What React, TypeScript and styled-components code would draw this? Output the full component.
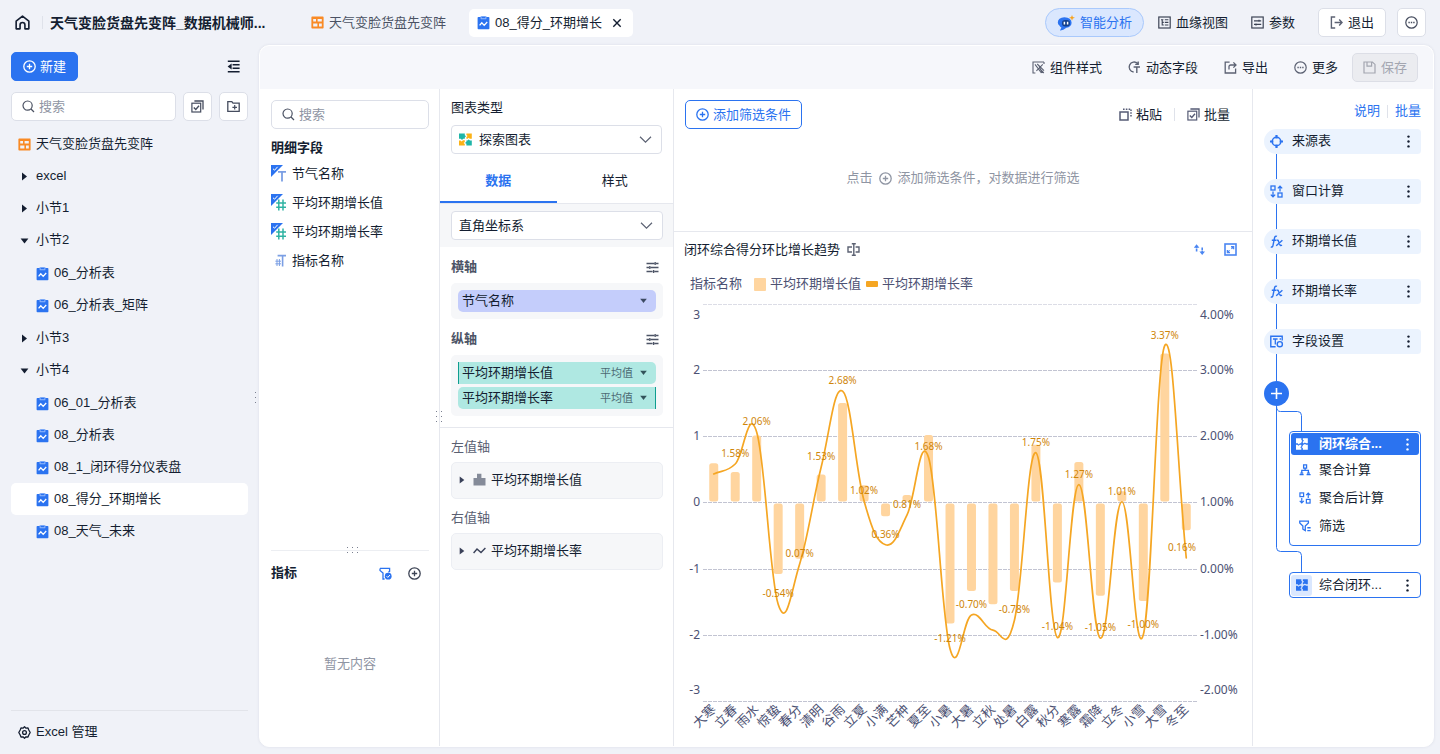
import React from "react";
import styled, { createGlobalStyle, css } from "styled-components";

const ink = "#141e31";
const blue = "#2b73f0";
const muted = "#8f95a3";
const line = "#e6e8ee";

const GlobalStyle = createGlobalStyle`
  *, *::before, *::after { box-sizing: border-box; }
  body {
    margin: 0;
    background: #f0f2f8;
    color: ${ink};
    font: 13px/20px "Liberation Sans", "Noto Sans CJK SC", sans-serif;
  }
  button, input, select { font: inherit; color: inherit; }
  button { cursor: pointer; }
  ul { list-style: none; margin: 0; padding: 0; }
  h1, h2, h3, p { margin: 0; font: inherit; }
`;

/* ---------- icons ---------- */

const Svg = styled.svg`
  display: block;
  flex: none;
  overflow: visible;
`;

type IconProps = { name: IconName; size?: number; color?: string };

const glyphs = {
  home: <path d="M1 5.4 6.5 1 12 5.4V12H8.6V8.6a2.1 2.1 0 0 0-4.2 0V12H1Z" strokeWidth="1.4" strokeLinejoin="round" />,
  board: (
    <path
      d="M1.2 .4H11.8A.8.8 0 0 1 12.6 1.2V11.8A.8.8 0 0 1 11.8 12.6H1.2A.8.8 0 0 1 .4 11.8V1.2A.8.8 0 0 1 1.2.4ZM2.2 3V5.6H5V3ZM6.6 3V5.6H10.8V3ZM2.2 7.4V10.6H6.4V7.4ZM8 7.4V10.6H10.8V7.4Z"
      fill="currentColor"
      fillRule="evenodd"
      stroke="none"
    />
  ),
  sheet: (
    <>
      <rect x="0.6" y="1" width="11.8" height="12.2" rx="0.8" fill="currentColor" stroke="none" />
      <rect x="3.6" y="0" width="5.8" height="3.2" rx="0.4" fill="#8fb6fb" stroke="none" />
      <rect x="4.6" y="0.8" width="3.8" height="1.4" fill="currentColor" stroke="none" />
      <path d="M2.6 9.4 4.8 6.8 7.2 9.4 10.2 6" stroke="#fff" strokeWidth="1.3" />
    </>
  ),
  close: <path d="M2.5 2.5 10.5 10.5M10.5 2.5 2.5 10.5" strokeWidth="1.5" />,
  lineage: (
    <>
      <rect x="0.8" y="1" width="11.4" height="11" strokeWidth="1.2" />
      <path d="M3 3.8H5.4M6.8 3.8H10.4M4.2 3.8V9H5.8M4.2 6.4H5.8M6.8 6.4H10.4M6.8 9H10.4" strokeWidth="1.1" />
    </>
  ),
  params: (
    <>
      <rect x="0.8" y="1" width="11.4" height="11" strokeWidth="1.2" />
      <path d="M3 4.8H10.2M3 8.4H10.2M8 3.8V5.8M5 7.4V9.4" strokeWidth="1.2" />
    </>
  ),
  exit: <path d="M5.2 1H1.4V12H5.2M4.6 6.5H11.8M9.2 3.6 12 6.5 9.2 9.4" strokeWidth="1.4" />,
  more: (
    <>
      <circle cx="6.5" cy="6.5" r="5.7" strokeWidth="1.2" />
      <path d="M3.4 6.5H4.8M5.8 6.5H7.2M8.2 6.5H9.6" strokeWidth="1.5" />
    </>
  ),
  plus: (
    <>
      <circle cx="6.5" cy="6.5" r="5.7" strokeWidth="1.3" />
      <path d="M3.8 6.5H9.2M6.5 3.8V9.2" strokeWidth="1.3" />
    </>
  ),
  collapse: (
    <>
      <path d="M.8 1.2H12.6M5.6 4.8H12.6M5.6 8.2H12.6M.8 11.8H12.6" strokeWidth="1.4" />
      <path d="M4.6 3.6V9.4L.6 6.5Z" fill="currentColor" stroke="none" />
    </>
  ),
  search: (
    <>
      <circle cx="5.6" cy="5.6" r="4.6" strokeWidth="1.2" />
      <path d="M9 9 12 12" strokeWidth="1.2" />
    </>
  ),
  multi: (
    <>
      <rect x="0.9" y="3.2" width="8.8" height="8.8" strokeWidth="1.2" />
      <path d="M3.4 1H12V9.4" strokeWidth="1.3" />
      <path d="M2.8 7.4 4.8 9.4 8 5.8" strokeWidth="1.4" />
    </>
  ),
  folder: (
    <>
      <path d="M0.8 11.4V1.6H4.8L6 3.2H12.2V11.4Z" strokeWidth="1.3" />
      <path d="M5.4 7.3H10M7.7 5V9.6" strokeWidth="1.2" />
    </>
  ),
  gear: (
    <>
      <path d="M6.5.8 8 2.2 10 2 10.8 4 12.2 6.5 10.8 9 10 11 8 10.8 6.5 12.2 5 10.8 3 11 2.2 9 .8 6.5 2.2 4 3 2 5 2.2Z" strokeWidth="1.3" strokeLinejoin="round" />
      <circle cx="6.5" cy="6.5" r="1.9" strokeWidth="1.3" />
    </>
  ),
  widgetStyle: <path d="M12 1H1V12H3.4M12 1V3M3 3.4 9.4 12M5.2 3 12 9.6M10.8 3.4 4.4 9.8M7 5.6 10.4 12M11.8 12 8 8" strokeWidth="1.1" />,
  dynamic: <path d="M9.6 2.4A5 5 0 1 0 5.6 11M10.2.6V3.4H7.2M5.6 6H12M8.8 6V12" strokeWidth="1.4" />,
  export: <path d="M5.6 1.2H1.2V12H11.6V7.6M5 8.4V5.6Q5 4 6.8 4H11.6M9.4 1.4 12 4 9.4 6.6" strokeWidth="1.3" />,
  save: <path d="M1 1H9.4L12 3.4V12H1ZM4 1V5.2H8.6V1" strokeWidth="1.2" />,
  paste: (
    <>
      <rect x="1" y="4" width="8" height="8" strokeWidth="1.5" />
      <path d="M4 1.2H12M12 1.4V9.4" strokeWidth="1.5" strokeDasharray="1.6 1.2" />
    </>
  ),
  rename: <path d="M5 4H1V9H5M8.6 4H12V9H8.6M4.8.8H8.8M4.8 12.2H8.8M6.8.8V12.2" strokeWidth="1.4" />,
  sort: (
    <>
      <path d="M3.6 8.6V3.6M9.2 4.6V9.6" strokeWidth="1.6" strokeDasharray="2.8 .6" />
      <path d="M.8 4.8 3.6 1.2 6.4 4.8ZM6.4 8.4 9.2 12 12 8.4Z" fill="currentColor" stroke="none" />
    </>
  ),
  expand: (
    <>
      <rect x="1" y="1" width="11" height="11" strokeWidth="1.6" />
      <path d="M7 3.6H9.6V6.2M6 9.6H3.4V7M9.4 3.8 7.4 5.8M3.6 9.4 5.6 7.4" strokeWidth="1.3" />
    </>
  ),
  sliders: <path d="M0.5 2.5H8.4M10 2.5H12.5M9.2 1V4M0.5 6.5H3M4.6 6.5H12.5M3.8 5V8M0.5 10.5H6.6M8.4 10.5H12.5M7.6 9V12" strokeWidth="1.3" />,
  chevron: <path d="M1 3.8 6.5 9.2 12 3.8" strokeWidth="1.2" />,
  right: <path d="M4 2.6 9 6.5 4 10.4Z" fill="currentColor" stroke="none" />,
  down: <path d="M2.6 4.4H10.4L6.5 9.4Z" fill="currentColor" stroke="none" />,
  filterCheck: (
    <>
      <path d="M1 1.4H10.6V4.4L9.4 5.2M1 1.4V3.4L4 6V12H5.6" strokeWidth="1.3" />
      <circle cx="9.2" cy="9.2" r="3.4" fill="currentColor" stroke="none" />
      <path d="M7.6 9.2 8.8 10.4 11 8" stroke="#fff" strokeWidth="1" />
    </>
  ),
  bars: <path d="M.5 12.5V5H4V.8H8.4V5H12.5V12.5Z" fill="currentColor" stroke="none" />,
  trend: <path d="M.6 9 4 5 8 8.6 12.4 4" strokeWidth="1.4" />,
  source: (
    <>
      <circle cx="6.5" cy="6.5" r="4.3" strokeWidth="1.5" />
      <path d="M6.5 0V3.4M6.5 9.6V13M0 6.5H3.4M9.6 6.5H13" strokeWidth="2.2" />
    </>
  ),
  windowCalc: (
    <>
      <rect x="1" y="1" width="4" height="4" strokeWidth="1.3" />
      <rect x="8" y="8" width="4" height="4" strokeWidth="1.3" />
      <path d="M3 6.4V11.8M.8 9.6 3 11.8 5.2 9.6M10 6.4V1.2M7.8 3.4 10 1.2 12.2 3.4" strokeWidth="1.3" />
    </>
  ),
  fx: <path d="M7 1.4Q5 .4 4.5 3L3 10.4Q2.6 12.6.8 11.8M1.8 5.2H6.2M6.6 5.4Q8 4.6 8.6 6.4L9.8 9.6Q10.4 11.2 12 10.2M12.4 5.2 6.2 10.8" strokeWidth="1.4" />,
  fieldSet: (
    <>
      <path d="M5.6 11.8H.8V1.2H12.2V5.6" strokeWidth="1.4" />
      <path d="M3 4H7.6M5.3 4V9.4M9.6 4H11" strokeWidth="1.3" />
      <circle cx="9.8" cy="9.2" r="2.6" strokeWidth="1.4" />
    </>
  ),
  aggregate: <path d="M5 1H8.2V4.4H5ZM6.6 4.4V6.6M3 9.4V6.8H10.2V9.4M.6 11.4H5M8.2 11.4H12.6M1.4 9.8H4.6M8.6 9.8H11.8" strokeWidth="1.4" />,
  filterList: <path d="M.8 1.2H10.2V3.2L6.8 6.6V11.6L4.2 10V6.6L.8 3.2ZM9 8.4H12.6M9 11.4H12.6" strokeWidth="1.4" />,
  explore: (
    <g stroke="none" fill="currentColor">
      <path d="M0 .4H5.8V2.2L7 3.2 5.8 4.4V5.8H4.2L3 7 1.8 5.8H0Z" />
      <path d="M7.4.4H12.8V5.8H10.8L9.6 4.8 8.6 5.8H7.4V4L8.6 3 7.4 2Z" />
      <path d="M0 7.4H1.4L2.6 8.4 4 7.2H5.8V9L4.6 10 5.8 11V12.6H0Z" />
      <path d="M8.4 7.4 9.6 6.4 11 7.4H12.8V12.6H7.4V10.8L6 10 7.4 8.8V7.4Z" />
    </g>
  ),
  kebab: (
    <g fill="currentColor" stroke="none">
      <circle cx="6.5" cy="1.6" r="1.2" />
      <circle cx="6.5" cy="6.5" r="1.2" />
      <circle cx="6.5" cy="11.4" r="1.2" />
    </g>
  ),
};
type IconName = keyof typeof glyphs;

const Icon = ({ name, size = 13, color = "currentColor" }: IconProps) => (
  <Svg width={size} height={size} viewBox="0 0 13 13" fill="none" stroke="currentColor" color={color} aria-hidden="true">
    {glyphs[name]}
  </Svg>
);

const Bot = () => (
  <Svg width="18" height="16" viewBox="0 0 18 16" aria-hidden="true">
    <path d="M.8 7.6Q1 2.4 7.4 2.2Q14.4 2.4 14.6 7.8 14.4 12 9.4 12.8Q6 15.6 3 15.4L4.4 12.6Q3 11.8 2.4 10.4 .8 9.6 .8 7.6Z" fill="#2b73f0" />
    <rect x="5" y="5" width="8" height="6.4" rx="3.2" fill="#123f8c" />
    <path d="M7.4 6.8V9.6M10.6 6.8V9.6" stroke="#fff" strokeWidth="1.5" />
    <path d="M15 0 15.8 2 18 2.8 15.8 3.6 15 5.8 14.2 3.6 12 2.8 14.2 2Z" fill="#f7a21b" />
  </Svg>
);

const ExploreLogo = () => (
  <Svg width="13" height="13" viewBox="0 0 13 13" aria-hidden="true">
    <path d="M0 .4H5.8V2.2L7 3.2 5.8 4.4V5.8H4.2L3 7 1.8 5.8H0Z" fill="#1fb5a8" />
    <path d="M7.4.4H12.8V5.8H10.8L9.6 4.8 8.6 5.8H7.4V4L8.6 3 7.4 2Z" fill="#fbb217" />
    <path d="M0 7.4H1.4L2.6 8.4 4 7.2H5.8V9L4.6 10 5.8 11V12.6H0Z" fill="#fbb217" />
    <path d="M8.4 7.4 9.6 6.4 11 7.4H12.8V12.6H7.4V10.8L6 10 7.4 8.8V7.4Z" fill="#1fb5a8" />
  </Svg>
);

type FieldKind = "text" | "number" | "plain";
const FieldIcon = ({ kind }: { kind: FieldKind }) => (
  <Svg width="15" height="17" viewBox="0 0 15 17" fill="none" aria-hidden="true">
    {kind !== "plain" && (
      <>
        <path d="M0 0H12L0 12Z" fill={blue} />
        <path d="M2 3.8 3.6 5.2 6.6 1.8" stroke="#fff" strokeWidth="1" />
      </>
    )}
    {kind === "text" && <path d="M7 6.8H15M11 6.8V16.6" stroke="#7b9fe4" strokeWidth="1.8" />}
    {kind === "number" && <path d="M7.8 5.6V16.4M12 5.6V16.4M5.2 9H15M5.2 13.2H15" stroke="#2fb3a3" strokeWidth="1.5" />}
    {kind === "plain" && (
      <>
        <path d="M6.6 3.6H15M11.6 3.6V14.4" stroke="#7b9fe4" strokeWidth="1.6" />
        <path d="M6 7V14M8.4 7V14M4.4 9.2H10M4.4 11.8H10" stroke="#7b9fe4" strokeWidth="1" />
      </>
    )}
  </Svg>
);

/* ---------- shared controls ---------- */

const PlainButton = styled.button<{ $color?: string; $gap?: number }>`
  display: flex;
  align-items: center;
  gap: ${(p) => p.$gap ?? 5}px;
  padding: 0;
  border: 0;
  background: none;
  white-space: nowrap;
  color: ${(p) => p.$color ?? ink};
`;

const BoxButton = styled(PlainButton)<{ $tone?: "primary" | "outline" | "disabled" }>`
  justify-content: center;
  height: 29px;
  padding: 0 11px;
  border: 1px solid #dcdfe8;
  border-radius: 5px;
  background: #fff;
  ${(p) => p.$tone === "primary" && css`color: #fff; background: ${blue}; border-color: ${blue};`}
  ${(p) => p.$tone === "outline" && css`padding: 0 10px; color: ${blue}; border-color: ${blue};`}
  ${(p) => p.$tone === "disabled" && css`padding: 0 10px; color: #a3a6b0; background: #ebecf0; border-color: #dcdee6;`}
`;

const SquareButton = styled(BoxButton)`
  width: 29px;
  padding: 0;
  color: #454c5e;
`;

const Divider = styled.span`
  width: 1px;
  height: 13px;
  background: #dfe2ea;
`;

const SearchBox = styled.label`
  display: flex;
  flex: 1;
  align-items: center;
  gap: 4px;
  min-width: 0;
  height: 29px;
  padding: 0 10px;
  color: #4a5162;
  background: #fff;
  border: 1px solid #dcdfe8;
  border-radius: 5px;
  input {
    width: 100%;
    min-width: 0;
    padding: 0;
    border: 0;
    outline: 0;
    background: none;
  }
  input::placeholder { color: ${muted}; opacity: 1; }
`;

const Search = () => (
  <SearchBox>
    <Icon name="search" />
    <input type="text" placeholder="搜索" aria-label="搜索" />
  </SearchBox>
);

const Dots = styled.span<{ $cols: number; $rows: number }>`
  display: grid;
  grid-template-columns: repeat(${(p) => p.$cols}, 1px);
  grid-template-rows: repeat(${(p) => p.$rows}, 1px);
  gap: 4px;
  i { background: #7b8090; }
`;
const Grip = ({ cols, rows }: { cols: number; rows: number }) => (
  <Dots $cols={cols} $rows={rows}>
    {Array.from({ length: cols * rows }, (_, i) => <i key={i} />)}
  </Dots>
);

/* ---------- page frame ---------- */

const Page = styled.div`
  display: flex;
  flex-direction: column;
  min-height: 100vh;
`;

const Header = styled.header`
  display: flex;
  align-items: center;
  height: 45px;
  padding: 0 14px 0 15px;
`;

const Title = styled.h1`
  width: 229px;
  margin: 0 24px 0 7px;
  font-size: 14px;
  font-weight: 700;
  white-space: nowrap;
`;

const HomeLink = styled.a`
  display: flex;
  margin-right: 12px;
  color: ${ink};
`;

const Tab = styled.div<{ $active?: boolean }>`
  display: flex;
  align-items: center;
  height: 28px;
  margin-right: 4px;
  padding: 0 10px 0 8px;
  border-radius: 5px;
  background: ${(p) => (p.$active ? "#fff" : "transparent")};
  color: ${(p) => (p.$active ? ink : "#4b5264")};
`;

const TabLabel = styled.span`
  margin: 0 9px 0 5px;
  white-space: nowrap;
`;

const HeaderActions = styled.div`
  display: flex;
  align-items: center;
  margin-left: auto;
`;

const AiButton = styled(PlainButton)`
  height: 29px;
  padding: 0 11px;
  margin-right: 14px;
  border: 1px solid #a9c9fc;
  border-radius: 15px;
  background: #dae7fe;
  color: ${blue};
`;

const HeaderItem = styled(PlainButton)`
  margin-right: 23px;
`;

const ExitButton = styled(BoxButton)`
  margin-right: 11px;
`;

const Body = styled.div`
  display: flex;
  flex: 1;
  padding: 0 6px 7px 11px;
`;

/* ---------- sidebar ---------- */

const Sidebar = styled.aside`
  display: flex;
  flex-direction: column;
  flex: none;
  width: 237px;
  padding-top: 7px;
`;

const SideTop = styled.div`
  display: flex;
  align-items: center;
  justify-content: space-between;
  padding-right: 8px;
`;

const SideSearch = styled.div`
  display: flex;
  gap: 7px;
  margin: 11px 0 7px;
`;

const TreeRow = styled(PlainButton)<{ $depth?: number; $active?: boolean }>`
  width: 100%;
  height: 32px;
  padding-left: ${(p) => (p.$depth ? 25 : 7)}px;
  border-radius: 5px;
  background: ${(p) => (p.$active ? "#fff" : "transparent")};
`;

const ChildList = styled.ul`
  margin: 1px 0;
`;

const SideFooter = styled.div`
  margin-top: auto;
  padding: 11px 0 5px 7px;
  border-top: 1px solid #e2e4ea;
`;

const SideGrip = styled.div`
  display: flex;
  flex: none;
  justify-content: flex-end;
  width: 11px;
  padding: 347px 3px 0 0;
`;

const tree: { name: string; children?: string[] }[] = [
  { name: "excel" },
  { name: "小节1" },
  { name: "小节2", children: ["06_分析表", "06_分析表_矩阵"] },
  { name: "小节3" },
  { name: "小节4", children: ["06_01_分析表", "08_分析表", "08_1_闭环得分仪表盘", "08_得分_环期增长", "08_天气_未来"] },
];

/* ---------- workspace ---------- */

const Panel = styled.main`
  display: flex;
  flex: 1;
  flex-direction: column;
  min-width: 0;
  overflow: hidden;
  border: 1px solid #fff;
  border-radius: 10px;
  background: #fff;
  box-shadow: 0 0 3px rgba(40, 50, 90, 0.1);
`;

const Toolbar = styled.div`
  display: flex;
  align-items: center;
  justify-content: flex-end;
  gap: 26px;
  height: 43px;
  padding-right: 15px;
  background: #f6f7fb;
`;

const SaveButton = styled(BoxButton)`
  margin-left: -12px;
`;

const Columns = styled.div`
  display: flex;
  flex: 1;
`;

const FieldColumn = styled.section`
  display: flex;
  flex: none;
  flex-direction: column;
  width: 180px;
  padding: 11px 10px 0 11px;
  border-right: 1px solid ${line};
`;

const SearchRow = styled.div`
  display: flex;
`;

const SectionTitle = styled.h2`
  font-weight: 700;
`;

const FieldTitle = styled(SectionTitle)`
  margin: 9px 0 1px;
`;

const FieldRow = styled.li`
  display: flex;
  align-items: center;
  gap: 6px;
  height: 29px;
`;

const MetricArea = styled.div`
  position: relative;
  display: flex;
  flex-direction: column;
  height: 196px;
  margin-top: auto;
  border-top: 1px solid #eceef2;
`;

const GripOverlay = styled.div`
  position: absolute;
  top: -4px;
  left: 76px;
`;

const MetricHead = styled.div`
  display: flex;
  align-items: center;
  gap: 16px;
  padding: 12px 8px 0 0;
  ${SectionTitle} { margin-right: auto; }
`;

const EmptyNote = styled.p`
  padding-top: 71px;
  color: ${muted};
  text-align: center;
`;

const ConfigColumn = styled.section`
  position: relative;
  flex: none;
  width: 234px;
  border-right: 1px solid ${line};
`;

const ColumnGrip = styled.div`
  position: absolute;
  top: 322px;
  left: -4px;
`;

const ConfigTop = styled.div`
  padding: 9px 11px 6px;
`;

const SelectBox = styled.label`
  display: flex;
  align-items: center;
  gap: 7px;
  height: 29px;
  padding: 0 9px 0 7px;
  background: #fff;
  border: 1px solid #dcdfe8;
  border-radius: 4px;
  select {
    flex: 1;
    min-width: 0;
    padding: 0;
    border: 0;
    outline: 0;
    appearance: none;
    background: none;
  }
`;

const TypeLabel = styled.h2`
  margin-bottom: 7px;
`;

const ConfigTabs = styled.div`
  display: flex;
  height: 44px;
  border-bottom: 1px solid ${line};
`;

const ConfigTab = styled.button<{ $active?: boolean }>`
  flex: 1;
  padding: 0;
  border: 0;
  border-bottom: 2px solid ${(p) => (p.$active ? blue : "transparent")};
  background: none;
  color: ${(p) => (p.$active ? blue : ink)};
  font-weight: ${(p) => (p.$active ? 700 : 400)};
`;

const CoordBand = styled.div`
  padding: 7px 10px 7px 11px;
  background: #f6f7f9;
`;

const Axis = styled.div`
  padding: 10px 10px 0 11px;
`;

const AxisHead = styled.div`
  display: flex;
  align-items: center;
  justify-content: space-between;
  height: 20px;
  padding-right: 4px;
  margin-bottom: 6px;
  color: #4d5466;
  font-weight: 700;
`;

const Well = styled.div`
  display: flex;
  flex-direction: column;
  gap: 3px;
  padding: 7px;
  border-radius: 5px;
  background: #f6f7f9;
`;

const Pill = styled.div<{ $kind: "dim" | "left" | "right" }>`
  display: flex;
  align-items: center;
  gap: 5px;
  height: 22px;
  padding: 0 7px 1px 4px;
  border-radius: 5px;
  background: ${(p) => (p.$kind === "dim" ? "#c4cdfb" : "#afe8e2")};
  ${(p) => p.$kind === "left" && css`border-left: 1px solid #0f9d8f; border-radius: 0 5px 5px 0; padding-left: 3px;`}
  ${(p) => p.$kind === "right" && css`border-right: 1px solid #0f9d8f; border-radius: 5px 0 0 5px; padding-right: 6px;`}
`;

const PillName = styled.span`
  margin-right: auto;
`;

const AggButton = styled(PlainButton)`
  font-size: 11px;
  color: #4c6a74;
`;

const ValueAxes = styled.div`
  margin-top: 11px;
  padding: 9px 10px 0 11px;
  border-top: 1px solid ${line};
`;

const AxisLabel = styled.h3`
  margin-bottom: 5px;
  color: #5a6072;
`;

const AxisCard = styled(PlainButton)`
  width: 100%;
  height: 37px;
  margin-bottom: 9px;
  padding: 0 4px 2px;
  border: 1px solid #eceef3;
  border-radius: 5px;
  background: #f6f7f9;
`;

/* ---------- chart column ---------- */

const ChartColumn = styled.section`
  flex: 1;
  min-width: 0;
`;

const FilterArea = styled.div`
  display: flex;
  flex-direction: column;
  height: 143px;
  padding-top: 11px;
  border-bottom: 1px solid ${line};
`;

const FilterBar = styled.div`
  display: flex;
  align-items: center;
  gap: 12px;
  padding: 0 22px 0 11px;
  ${BoxButton} { margin-right: auto; }
`;

const FilterHint = styled.p`
  display: flex;
  align-items: center;
  justify-content: center;
  gap: 6px;
  padding-top: 39px;
  color: ${muted};
`;

const ChartHead = styled.div`
  display: flex;
  align-items: center;
  gap: 18px;
  height: 32px;
  padding: 3px 15px 0 10px;
`;

const ChartTitle = styled.h2`
  display: flex;
  align-items: center;
  gap: 7px;
  margin-right: auto;
`;

const Legend = styled.div`
  display: flex;
  align-items: center;
  gap: 5px;
  height: 32px;
  padding: 8px 16px 0;
  color: #4c5173;
`;

const LegendItem = styled.span`
  display: flex;
  align-items: center;
  gap: 4px;
`;

const LegendTitle = styled.span`
  margin-right: 7px;
`;

const Swatch = styled.i<{ $color: string; $h: number }>`
  width: 12px;
  height: ${(p) => p.$h}px;
  border-radius: 1px;
  background: ${(p) => p.$color};
`;

const ChartSvg = styled.svg`
  display: block;
  width: 100%;
  height: auto;
  font-family: "Noto Sans", "Noto Sans CJK SC", sans-serif;
`;

type Term = [name: string, bar: number, rate: number];
const terms: Term[] = [
  ["大寒", 0.59, 1.43], ["立春", 0.46, 1.58], ["雨水", 1.01, 2.06], ["惊蛰", -1.08, -0.54],
  ["春分", -0.85, 0.07], ["清明", 0.42, 1.53], ["谷雨", 1.5, 2.68], ["立夏", 0.26, 1.02],
  ["小满", -0.21, 0.36], ["芒种", 0.11, 0.81], ["夏至", 1.02, 1.68], ["小暑", -1.83, -1.21],
  ["大暑", -1.34, -0.7], ["立秋", -1.54, -0.93], ["处暑", -1.34, -0.78], ["白露", 0.87, 1.75],
  ["秋分", -1.21, -1.04], ["寒露", 0.61, 1.27], ["霜降", -1.41, -1.05], ["立冬", 0.17, 1.01],
  ["小雪", -1.49, -1.0], ["大雪", 2.25, 3.37], ["冬至", -0.42, 0.16],
];
const unlabeled = ["大寒", "立秋"];

const plot = { left: 29, right: 523, zero: 206.4, unit: 66.2 };
const step = (plot.right - plot.left) / terms.length;
const xAt = (i: number) => plot.left + step * (i + 0.5);
const barY = (v: number) => plot.zero - v * plot.unit;
const rateY = (v: number) => plot.zero - (v - 1) * plot.unit;

const smoothPath = (pts: [number, number][]) => {
  const slope = (i: number) => {
    const a = pts[Math.max(i - 1, 0)];
    const b = pts[Math.min(i + 1, pts.length - 1)];
    return (b[1] - a[1]) / (b[0] - a[0]);
  };
  return pts.reduce((d, [x, y], i) => {
    if (i === 0) return `M${x} ${y}`;
    const [px, py] = pts[i - 1];
    const h = (x - px) * 0.4;
    return `${d}C${px + h} ${py + slope(i - 1) * h} ${x - h} ${y - slope(i) * h} ${x} ${y}`;
  }, "");
};

const Chart = () => {
  const pts = terms.map(([, , rate], i): [number, number] => [xAt(i), rateY(rate)]);
  return (
    <ChartSvg viewBox="0 0 578 450" role="img" aria-label="闭环综合得分环比增长趋势">
      {[3, 2, 1, 0, -1, -2, -3].map((v) => (
        <g key={v}>
          <line x1={plot.left} x2={plot.right} y1={Math.round(barY(v)) + 0.5} y2={Math.round(barY(v)) + 0.5} stroke={v === 3 ? "#dcdde6" : "#c2c4d2"} strokeDasharray="4 1" />
          <g fontSize="12" fill="#4c5173">
            <text x="26" y={barY(v) + (v === 3 ? 15 : v === -3 ? -7 : 4)} textAnchor="end">{v}</text>
            <text x="526" y={barY(v) + (v === 3 ? 15 : v === -3 ? -7 : 4)}>{(v + 1).toFixed(2)}%</text>
          </g>
        </g>
      ))}
      {terms.map(([name, bar], i) => (
        <rect
          key={name}
          x={xAt(i) - 4.5}
          y={bar > 0 ? barY(bar) : plot.zero + 1}
          width="9"
          height={Math.abs(bar) * plot.unit - 1}
          rx="2.5"
          fill="#ffd59f"
        />
      ))}
      <path d={smoothPath(pts)} fill="none" stroke="#f5a623" strokeWidth="1.7" strokeLinecap="round" />
      {terms.map(([name, , rate], i) => (
        <g key={name}>
          {!unlabeled.includes(name) && (
            <text x={Math.min(xAt(i), plot.right - 15)} y={rateY(rate) - 7} fontSize="10" fill="#cf860a" textAnchor="middle">{rate.toFixed(2)}%</text>
          )}
          <text transform={`translate(${xAt(i) + 3} 414) rotate(-45)`} fontSize="13" fill="#4c5173" textAnchor="end">{name}</text>
        </g>
      ))}
    </ChartSvg>
  );
};

/* ---------- step flow column ---------- */

const FlowColumn = styled.section`
  flex: none;
  width: 181px;
  padding: 12px 12px 0 11px;
  border-left: 1px solid ${line};
`;

const FlowLinks = styled.div`
  display: flex;
  align-items: center;
  justify-content: flex-end;
  gap: 7px;
  margin-bottom: 8px;
  a { color: ${blue}; text-decoration: none; }
`;

const Step = styled.div`
  display: flex;
  align-items: center;
  height: 25px;
  padding: 0 6px;
  border-radius: 13px 4px 4px 13px;
  background: #ebf3fe;
`;

const StepName = styled.span`
  margin: 0 auto 0 9px;
  padding-bottom: 1px;
  white-space: nowrap;
`;

const Link = styled.div<{ $last?: boolean }>`
  width: 1px;
  height: ${(p) => (p.$last ? 27 : 25)}px;
  margin-left: 12px;
  background: ${blue};
`;

const AddStep = styled.button`
  display: flex;
  align-items: center;
  justify-content: center;
  width: 25px;
  height: 25px;
  padding: 0;
  border: 0;
  border-radius: 50%;
  background: ${blue};
`;

const Branches = styled.div`
  position: relative;
  padding: 25px 0 0 25px;
`;

const BranchLines = styled.svg`
  position: absolute;
  top: 0;
  left: 12px;
`;

const BranchCard = styled.div`
  padding: 1px;
  border: 1px solid ${blue};
  border-radius: 4px;
  background: #fff;
`;

const ActiveCard = styled(BranchCard)`
  height: 115px;
  margin-bottom: 26px;
`;

const BranchRow = styled.div<{ $kind?: "head" | "item" }>`
  display: flex;
  align-items: center;
  height: 22px;
  padding: 0 5px;
  ${(p) => p.$kind === "head" && css`background: ${blue}; color: #fff; font-weight: 700; border-radius: 3px;`}
  ${(p) => p.$kind === "item" && css`height: 28px; padding: 0 8px; color: ${ink};`}
`;

const BranchName = styled.span<{ $indent: number }>`
  margin: 0 auto 0 ${(p) => p.$indent}px;
  white-space: nowrap;
`;

const BranchBadge = styled.span`
  display: flex;
  align-items: center;
  justify-content: center;
  width: 21px;
  height: 21px;
  margin-left: -5px;
  background: #dae7fe;
  border-radius: 3px;
`;

const BranchItems = styled.div`
  padding-top: 1px;
`;

const steps: [IconName, string][] = [
  ["source", "来源表"],
  ["windowCalc", "窗口计算"],
  ["fx", "环期增长值"],
  ["fx", "环期增长率"],
  ["fieldSet", "字段设置"],
];

const StepMenu = ({ color }: { color?: string }) => (
  <PlainButton aria-label="操作">
    <Icon name="kebab" color={color ?? ink} />
  </PlainButton>
);

const fields: [FieldKind, string][] = [
  ["text", "节气名称"],
  ["number", "平均环期增长值"],
  ["number", "平均环期增长率"],
  ["plain", "指标名称"],
];

const iconGray = "#5c6273";

export default function App() {
  return (
    <Page>
      <GlobalStyle />
      <Header>
        <HomeLink href="#" aria-label="首页"><Icon name="home" size={15} /></HomeLink>
        <Divider />
        <Title>天气变脸货盘先变阵_数据机械师...</Title>
        <Tab>
          <Icon name="board" color="#f98a25" />
          <TabLabel>天气变脸货盘先变阵</TabLabel>
        </Tab>
        <Tab $active>
          <Icon name="sheet" color={blue} />
          <TabLabel>08_得分_环期增长</TabLabel>
          <PlainButton aria-label="关闭"><Icon name="close" size={12} /></PlainButton>
        </Tab>
        <HeaderActions>
          <AiButton><Bot />智能分析</AiButton>
          <HeaderItem><Icon name="lineage" color="#3d4455" />血缘视图</HeaderItem>
          <HeaderItem><Icon name="params" color="#3d4455" />参数</HeaderItem>
          <ExitButton><Icon name="exit" color={iconGray} />退出</ExitButton>
          <SquareButton aria-label="更多"><Icon name="more" /></SquareButton>
        </HeaderActions>
      </Header>

      <Body>
        <Sidebar>
          <SideTop>
            <BoxButton $tone="primary" $gap={4}><Icon name="plus" />新建</BoxButton>
            <PlainButton aria-label="收起"><Icon name="collapse" /></PlainButton>
          </SideTop>
          <SideSearch>
            <Search />
            <SquareButton aria-label="批量选择"><Icon name="multi" /></SquareButton>
            <SquareButton aria-label="新建文件夹"><Icon name="folder" /></SquareButton>
          </SideSearch>
          <nav>
            <TreeRow><Icon name="board" color="#f98a25" />天气变脸货盘先变阵</TreeRow>
            <ul>
              {tree.map((group) => (
                <li key={group.name}>
                  <TreeRow><Icon name={group.children ? "down" : "right"} />{group.name}</TreeRow>
                  {group.children && (
                    <ChildList>
                      {group.children.map((name) => (
                        <li key={name}>
                          <TreeRow $depth={1} $active={name === "08_得分_环期增长"}>
                            <Icon name="sheet" color={blue} />{name}
                          </TreeRow>
                        </li>
                      ))}
                    </ChildList>
                  )}
                </li>
              ))}
            </ul>
          </nav>
          <SideFooter>
            <PlainButton><Icon name="gear" />Excel 管理</PlainButton>
          </SideFooter>
        </Sidebar>
        <SideGrip><Grip cols={1} rows={3} /></SideGrip>

        <Panel>
          <Toolbar>
            <PlainButton><Icon name="widgetStyle" color={iconGray} />组件样式</PlainButton>
            <PlainButton><Icon name="dynamic" color={iconGray} />动态字段</PlainButton>
            <PlainButton><Icon name="export" color={iconGray} />导出</PlainButton>
            <PlainButton><Icon name="more" color={iconGray} />更多</PlainButton>
            <SaveButton $tone="disabled" disabled><Icon name="save" />保存</SaveButton>
          </Toolbar>

          <Columns>
            <FieldColumn>
              <SearchRow><Search /></SearchRow>
              <FieldTitle>明细字段</FieldTitle>
              <ul>
                {fields.map(([kind, name]) => (
                  <FieldRow key={name}><FieldIcon kind={kind} />{name}</FieldRow>
                ))}
              </ul>
              <MetricArea>
                <GripOverlay><Grip cols={3} rows={2} /></GripOverlay>
                <MetricHead>
                  <SectionTitle>指标</SectionTitle>
                  <PlainButton aria-label="校验指标"><Icon name="filterCheck" color={blue} /></PlainButton>
                  <PlainButton aria-label="添加指标"><Icon name="plus" color="#3d4455" /></PlainButton>
                </MetricHead>
                <EmptyNote>暂无内容</EmptyNote>
              </MetricArea>
            </FieldColumn>

            <ConfigColumn>
              <ColumnGrip><Grip cols={2} rows={3} /></ColumnGrip>
              <ConfigTop>
                <TypeLabel>图表类型</TypeLabel>
                <SelectBox>
                  <ExploreLogo />
                  <select aria-label="图表类型"><option>探索图表</option></select>
                  <Icon name="chevron" color={iconGray} />
                </SelectBox>
              </ConfigTop>
              <ConfigTabs role="tablist">
                <ConfigTab role="tab" $active>数据</ConfigTab>
                <ConfigTab role="tab">样式</ConfigTab>
              </ConfigTabs>
              <CoordBand>
                <SelectBox>
                  <select aria-label="坐标系"><option>直角坐标系</option></select>
                  <Icon name="chevron" color={iconGray} />
                </SelectBox>
              </CoordBand>
              <Axis>
                <AxisHead>横轴<Icon name="sliders" /></AxisHead>
                <Well>
                  <Pill $kind="dim">
                    <PillName>节气名称</PillName>
                    <AggButton aria-label="字段设置"><Icon name="down" size={11} color="#3c4a63" /></AggButton>
                  </Pill>
                </Well>
              </Axis>
              <Axis>
                <AxisHead>纵轴<Icon name="sliders" /></AxisHead>
                <Well>
                  <Pill $kind="left">
                    <PillName>平均环期增长值</PillName>
                    <AggButton>平均值<Icon name="down" size={11} color="#33535a" /></AggButton>
                  </Pill>
                  <Pill $kind="right">
                    <PillName>平均环期增长率</PillName>
                    <AggButton>平均值<Icon name="down" size={11} color="#33535a" /></AggButton>
                  </Pill>
                </Well>
              </Axis>
              <ValueAxes>
                <AxisLabel>左值轴</AxisLabel>
                <AxisCard><Icon name="right" size={12} color="#3a4159" /><Icon name="bars" color="#858b99" />平均环期增长值</AxisCard>
                <AxisLabel>右值轴</AxisLabel>
                <AxisCard><Icon name="right" size={12} color="#3a4159" /><Icon name="trend" color="#3a4159" />平均环期增长率</AxisCard>
              </ValueAxes>
            </ConfigColumn>

            <ChartColumn>
              <FilterArea>
                <FilterBar>
                  <BoxButton $tone="outline" $gap={4}><Icon name="plus" />添加筛选条件</BoxButton>
                  <PlainButton $gap={4}><Icon name="paste" color="#565b75" />粘贴</PlainButton>
                  <Divider />
                  <PlainButton $gap={4}><Icon name="multi" color="#565b75" />批量</PlainButton>
                </FilterBar>
                <FilterHint>点击<Icon name="plus" /><span>添加筛选条件，对数据进行筛选</span></FilterHint>
              </FilterArea>
              <ChartHead>
                <ChartTitle>闭环综合得分环比增长趋势<Icon name="rename" color={iconGray} /></ChartTitle>
                <PlainButton aria-label="排序"><Icon name="sort" color="#4b86f2" /></PlainButton>
                <PlainButton aria-label="放大"><Icon name="expand" color="#4b86f2" /></PlainButton>
              </ChartHead>
              <Legend>
                <LegendTitle>指标名称</LegendTitle>
                <LegendItem><Swatch $color="#ffd59f" $h={13} />平均环期增长值</LegendItem>
                <LegendItem><Swatch $color="#f5a623" $h={6} />平均环期增长率</LegendItem>
              </Legend>
              <Chart />
            </ChartColumn>

            <FlowColumn>
              <FlowLinks>
                <a href="#">说明</a>
                <Divider />
                <a href="#">批量</a>
              </FlowLinks>
              {steps.map(([icon, name], i) => (
                <React.Fragment key={name}>
                  <Step>
                    <Icon name={icon} color={blue} />
                    <StepName>{name}</StepName>
                    <StepMenu />
                  </Step>
                  <Link $last={i === steps.length - 1} />
                </React.Fragment>
              ))}
              <AddStep aria-label="添加步骤">
                <Svg width="13" height="13" viewBox="0 0 13 13" stroke="#fff" strokeWidth="1.6"><path d="M1 6.5H12M6.5 1V12" /></Svg>
              </AddStep>
              <Branches>
                <BranchLines width="27" height="166" viewBox="0 0 27 166" fill="none" stroke={blue} aria-hidden="true">
                  <path d="M.5 0Q.5 5.5 4.5 5.5H21.5Q25.5 5.5 25.5 9.5V25M.5 0V141.5Q.5 145.5 4.5 145.5H21.5Q25.5 145.5 25.5 149.5V166" />
                </BranchLines>
                <ActiveCard>
                  <BranchRow $kind="head">
                    <Icon name="explore" size={12} />
                    <BranchName $indent={11}>闭环综合...</BranchName>
                    <StepMenu color="#fff" />
                  </BranchRow>
                  <BranchItems>
                    <BranchRow $kind="item"><Icon name="aggregate" color={blue} size={12} /><BranchName $indent={8}>聚合计算</BranchName></BranchRow>
                    <BranchRow $kind="item"><Icon name="windowCalc" color={blue} size={12} /><BranchName $indent={8}>聚合后计算</BranchName></BranchRow>
                    <BranchRow $kind="item"><Icon name="filterList" color={blue} size={12} /><BranchName $indent={8}>筛选</BranchName></BranchRow>
                  </BranchItems>
                </ActiveCard>
                <BranchCard>
                  <BranchRow>
                    <BranchBadge><Icon name="explore" size={12} color={blue} /></BranchBadge>
                    <BranchName $indent={7}>综合闭环...</BranchName>
                    <StepMenu />
                  </BranchRow>
                </BranchCard>
              </Branches>
            </FlowColumn>
          </Columns>
        </Panel>
      </Body>
    </Page>
  );
}
